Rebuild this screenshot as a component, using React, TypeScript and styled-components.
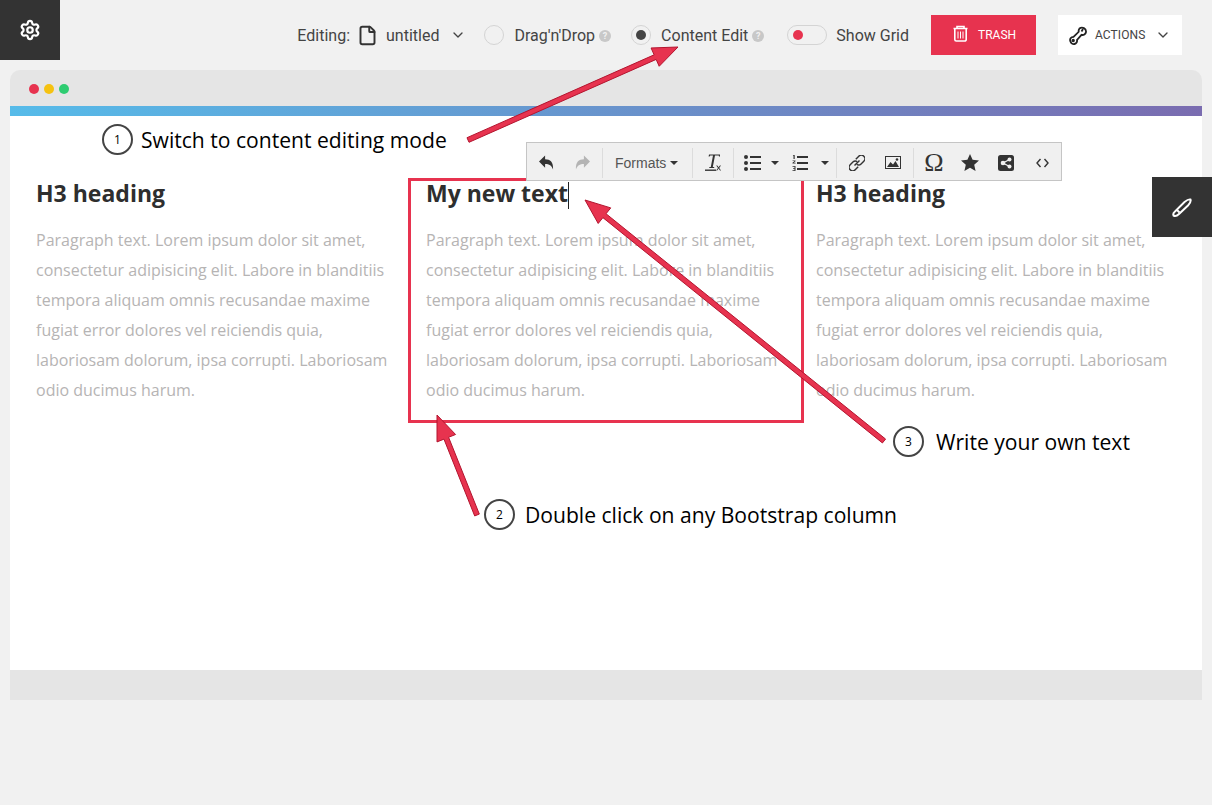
import React from "react";
import styled, { createGlobalStyle } from "styled-components";
import { ChevronDown, File, Settings } from "lucide-react";

const Global = createGlobalStyle`
  html, body { margin: 0; padding: 0; background: #f1f1f1; }
  body { font-family: Roboto, "Liberation Sans", sans-serif; }
`;

const Page = styled.div`
  position: relative;
  width: 1212px;
  height: 805px;
  overflow: hidden;
  background: #f1f1f1;
`;

const TopBar = styled.header`
  display: flex;
  align-items: flex-start;
  justify-content: space-between;
  height: 70px;
`;

const GearBox = styled.div`
  width: 60px;
  height: 60px;
  background: #333;
  color: #fff;
  display: flex;
  align-items: center;
  justify-content: center;
`;

const Controls = styled.div`
  display: flex;
  align-items: center;
  height: 40px;
  margin-top: 15px;
  margin-right: 30px;
  color: #444;
  font-size: 16px;
`;

const Label = styled.span<{ $ml?: number }>`
  margin-left: ${(p) => p.$ml ?? 0}px;
  white-space: nowrap;
`;

const FileSlot = styled.span`
  display: flex;
  margin-left: 7px;
  margin-right: 8px;
  color: #333;
`;

const Radio = styled.span<{ $ml: number; $on?: boolean }>`
  box-sizing: border-box;
  margin-left: ${(p) => p.$ml}px;
  width: 20px;
  height: 20px;
  border-radius: 50%;
  border: 1px solid #d4d4d4;
  display: flex;
  align-items: center;
  justify-content: center;
  &::after {
    content: "";
    display: ${(p) => (p.$on ? "block" : "none")};
    width: 10px;
    height: 10px;
    border-radius: 50%;
    background: #444;
  }
`;

const Help = styled.span`
  margin-left: 4px;
  margin-top: 1px;
  width: 12px;
  height: 12px;
  border-radius: 50%;
  background: #c8c8c8;
  color: #f1f1f1;
  font-size: 9px;
  font-weight: 700;
  line-height: 12px;
  text-align: center;
`;

const Switch = styled.span`
  box-sizing: border-box;
  margin-left: 23px;
  width: 40px;
  height: 20px;
  border-radius: 10px;
  border: 1px solid #d4d4d4;
  display: flex;
  align-items: center;
  padding-left: 5px;
  &::after {
    content: "";
    width: 10px;
    height: 10px;
    border-radius: 50%;
    background: #e7334f;
  }
`;

const TrashButton = styled.div`
  margin-left: 22px;
  width: 105px;
  height: 40px;
  background: #e7334f;
  color: #fff;
  display: flex;
  align-items: center;
  padding-left: 22px;
  box-sizing: border-box;
  gap: 10px;
  font-size: 12px;
  font-weight: 400;
  svg {
    margin-top: -3px;
  }
`;

const ActionsButton = styled.div`
  margin-left: 22px;
  width: 124px;
  height: 40px;
  background: #fff;
  color: #444;
  display: flex;
  align-items: center;
  padding-left: 10px;
  box-sizing: border-box;
  font-size: 12px;
  letter-spacing: 0.1px;
`;

const Frame = styled.main`
  margin: 0 10px;
`;

const TitleBar = styled.div`
  height: 36px;
  background: #e5e5e5;
  border-radius: 10px 10px 0 0;
  display: flex;
  align-items: center;
  gap: 5px;
  padding: 2px 0 0 19px;
  box-sizing: border-box;
`;

const Dot = styled.span<{ $c: string }>`
  width: 10px;
  height: 10px;
  border-radius: 50%;
  background: ${(p) => p.$c};
`;

const Stripe = styled.div`
  height: 10px;
  background: linear-gradient(90deg, #56bbe9, #7a6cb0);
`;

const Content = styled.div`
  height: 554px;
  background: #fff;
  padding: 65px 11px 0;
  box-sizing: border-box;
  display: flex;
  font-family: "Open Sans", sans-serif;
`;

const Column = styled.section<{ $selected?: boolean }>`
  width: 390px;
  height: 239px;
  padding: 0 15px;
  box-sizing: border-box;
  outline: ${(p) => (p.$selected ? "3px solid #e7334f" : "none")};
`;

const Heading = styled.h3`
  margin: 0 0 19px;
  color: #2e2e2e;
  font-size: 23px;
  line-height: 25px;
  font-weight: 700;
  height: 25px;
`;

const Caret = styled.span`
  display: inline-block;
  width: 1px;
  height: 27px;
  background: #222;
  vertical-align: -7px;
`;

const Para = styled.p`
  margin: 0;
  color: #b6b4b4;
  font-size: 16px;
  line-height: 30px;
`;

const Footer = styled.div`
  height: 30px;
  background: #e5e5e5;
`;

const SideTab = styled.div`
  position: absolute;
  top: 177px;
  right: 0;
  width: 60px;
  height: 60px;
  background: #333;
  color: #fff;
  display: flex;
  align-items: center;
  justify-content: center;
`;

const Editor = styled.div`
  position: absolute;
  left: 526px;
  top: 142px;
  width: 536px;
  height: 39px;
  box-sizing: border-box;
  padding-top: 2px;
  background: #f0f0f0;
  border: 1px solid #c5c5c5;
  display: flex;
  align-items: center;
  color: #333;
`;

const Group = styled.div<{ $w: number; $last?: boolean }>`
  width: ${(p) => p.$w}px;
  height: 30px;
  box-sizing: border-box;
  border-right: ${(p) => (p.$last ? "none" : "1px solid #dcdcdc")};
  display: flex;
  align-items: center;
  flex: none;
`;

const ToolIcon = styled.span<{ $w: number; $muted?: boolean }>`
  width: ${(p) => p.$w}px;
  flex: none;
  display: flex;
  align-items: center;
  justify-content: center;
  color: ${(p) => (p.$muted ? "#b4b4b4" : "#333")};
`;

const Formats = styled.span`
  font-family: "Liberation Sans", Arial, sans-serif;
  font-size: 14px;
  color: #555;
  margin-left: 12px;
  padding-top: 1px;
  display: flex;
  align-items: center;
  gap: 4px;
`;

const DownCaret = styled.i`
  display: inline-block;
  flex: none;
  width: 0;
  height: 0;
  border-left: 4px solid transparent;
  border-right: 4px solid transparent;
  border-top: 4px solid #333;
`;

const Omega = styled.span`
  font-family: "Liberation Serif", serif;
  font-size: 26px;
  line-height: 22px;
`;

const Callout = styled.div<{ $x: number; $y: number }>`
  position: absolute;
  left: ${(p) => p.$x}px;
  top: ${(p) => p.$y}px;
  height: 31px;
  display: flex;
  align-items: center;
  color: #000;
  font-family: "Open Sans", sans-serif;
  font-size: 21.1px;
  white-space: nowrap;
`;

const Badge = styled.span<{ $mr?: number }>`
  box-sizing: border-box;
  width: 31px;
  height: 31px;
  border: 2px solid #444;
  border-radius: 50%;
  background: #fff;
  display: flex;
  align-items: center;
  justify-content: center;
  font-size: 12px;
  margin-right: ${(p) => p.$mr ?? 8}px;
`;

const CalloutText = styled.span`
  line-height: 31px;
`;

const ArrowLayer = styled.svg`
  position: absolute;
  left: 0;
  top: 0;
  pointer-events: none;
`;

type Pt = [number, number];

function Arrow({ tail, tip, head = 25, spread = 10, shaft = 2.5 }: { tail: Pt; tip: Pt; head?: number; spread?: number; shaft?: number }) {
  const dx = tip[0] - tail[0];
  const dy = tip[1] - tail[1];
  const len = Math.hypot(dx, dy);
  const ux = dx / len;
  const uy = dy / len;
  const nx = -uy;
  const ny = ux;
  const bx = tip[0] - ux * head;
  const by = tip[1] - uy * head;
  const pts: Pt[] = [
    [tail[0] + nx * shaft, tail[1] + ny * shaft],
    [bx + nx * shaft, by + ny * shaft],
    [bx + nx * spread, by + ny * spread],
    tip,
    [bx - nx * spread, by - ny * spread],
    [bx - nx * shaft, by - ny * shaft],
    [tail[0] - nx * shaft, tail[1] - ny * shaft],
  ];
  return <polygon points={pts.map((p) => p.join(",")).join(" ")} fill="#e7334f" stroke="#b3152f" strokeWidth="1" />;
}

const Bullets = () => (
  <svg width="17" height="16" viewBox="0 0 17 16" fill="currentColor">
    <circle cx="2" cy="2" r="2" />
    <circle cx="2" cy="8" r="2" />
    <circle cx="2" cy="14" r="2" />
    <rect x="6" y="1" width="11" height="2" />
    <rect x="6" y="7" width="11" height="2" />
    <rect x="6" y="13" width="11" height="2" />
  </svg>
);

const Numbers = () => (
  <svg width="16" height="16" viewBox="0 0 16 16" fill="currentColor">
    <path d="M1.500 0h1.200v4H1.500V1H.8zM.5 5.400h3v.9L1.800 7.700h1.800v.8H.5v-.8l2-1.600h-2zM.5 11h3v5h-3v-.8h2V14H1.100v-.7H2.500V11.800h-2z" />
    <rect x="5" y="1" width="11" height="2" />
    <rect x="5" y="7" width="11" height="2" />
    <rect x="5" y="13" width="11" height="2" />
  </svg>
);

const Undo = ({ flip }: { flip?: boolean }) => (
  <svg width="15" height="15" viewBox="0 0 16 15" fill="currentColor" style={flip ? { transform: "scaleX(-1)" } : undefined}>
    <path d="M6.500 0v4C12 4 15.500 7 15 15c-1.500-4.500-4-6-8.500-6v4L0 6.500z" />
  </svg>
);

const ClearFormat = () => (
  <svg width="17" height="17" viewBox="0 0 17 17" fill="currentColor">
    <path d="M4 .5h11v2h-1l-.3-1H10L7.800 13H9.200v1H4.300v-1h1.500L8 1.500H5.200l-.6 1h-1z" />
    <rect x="0" y="15.500" width="11" height="1.400" />
    <path d="M11.200 11.500h1.100l1.300 1.700 1.300-1.700H16l-1.800 2.400 1.900 2.600h-1.100l-1.400-1.900-1.400 1.900h-1.100l1.900-2.600z" />
  </svg>
);

const LinkIcon = () => (
  <svg width="16" height="16" viewBox="0 0 16 16" fill="none" stroke="currentColor" strokeWidth="1.400">
    <path d="M6.800 4.200l3-3a2.800 2.800 0 0 1 5 5l-3 3a2.800 2.800 0 0 1-4 0" />
    <path d="M9.200 11.800l-3 3a2.800 2.800 0 0 1-5-5l3-3a2.800 2.800 0 0 1 4 0" />
    <path d="M5.500 10.500l5-5" />
  </svg>
);

const ImageIcon = () => (
  <svg width="16" height="13" viewBox="0 0 16 13" fill="none">
    <rect x=".5" y=".5" width="15" height="12" stroke="#333" />
    <path fill="#333" d="M2 11l3.500-5 2.500 2.500 2.500-3.500 3.500 6z" />
    <circle cx="12" cy="3.500" r="1.300" fill="#333" />
  </svg>
);

const Star = () => (
  <svg width="18" height="17" viewBox="0 0 18 17" fill="currentColor">
    <path d="M9 0l2.600 5.800 6.400.7-4.800 4.200 1.400 6.300L9 13.800 3.400 17l1.400-6.300L0 6.500l6.400-.7z" />
  </svg>
);

const ShareBox = () => (
  <svg width="16" height="16" viewBox="0 0 16 16">
    <rect width="16" height="16" rx="2.500" fill="#333" />
    <g fill="#f0f0f0">
      <circle cx="11.500" cy="4.500" r="2" />
      <circle cx="11.500" cy="11.500" r="2" />
      <circle cx="5" cy="8" r="2.300" />
    </g>
    <path d="M11.500 4.500L5 8l6.500 3.500" stroke="#f0f0f0" strokeWidth="1.300" fill="none" />
  </svg>
);

const CodeIcon = () => (
  <svg width="13" height="10" viewBox="0 0 13 10" fill="none" stroke="currentColor" strokeWidth="1.400">
    <path d="M4.500 1L1 5l3.500 4M8.500 1L12 5 8.500 9" />
  </svg>
);

const TrashIcon = () => (
  <svg width="15" height="17" viewBox="0 0 15 17" fill="none" stroke="#fff" strokeWidth="1.600">
    <path d="M4 3V1.500h7V3M.5 3.500h14M1.800 4v10.500a1.500 1.500 0 0 0 1.500 1.500h8.400a1.500 1.500 0 0 0 1.500-1.500V4" />
    <path d="M5 6.500v7M7.500 6.500v7M10 6.500v7" strokeWidth="1" />
  </svg>
);

const WrenchIcon = () => (
  <svg width="20" height="19" viewBox="0 0 19 19" fill="none" stroke="#222" strokeWidth="1.800">
    <path d="M11 2.500a4 4 0 0 1 6.500 3.500c-.3 2-2.500 3.500-4.500 2.800L8.500 14a3.300 3.300 0 0 1-6.500 1.500C.800 13 2.500 11 5 10.800l5.200-5a4 4 0 0 1 .8-3.300z" />
    <circle cx="4.700" cy="14.500" r=".8" />
    <path d="M14.500 3l-1.500 2.500" />
  </svg>
);

const Feather = () => (
  <svg width="20" height="19" viewBox="0 0 20 19" fill="none" stroke="#fff" strokeWidth="2">
    <path d="M1.500 17.500c-.6-1.500.2-3 1.500-4L12.500 4c2.500-2 4.500-3 6-2.500.5 1.500-.5 4-2.500 6L7 16c-1.500 1.400-3.500 2.500-5.500 1.500z" />
    <path d="M4.500 11.500l3 3" />
  </svg>
);

const columns = [
  { title: "H3 heading" },
  { title: "My new text", selected: true },
  { title: "H3 heading" },
];

const lines = [
  "Paragraph text. Lorem ipsum dolor sit amet,",
  "consectetur adipisicing elit. Labore in blanditiis",
  "tempora aliquam omnis recusandae maxime",
  "fugiat error dolores vel reiciendis quia,",
  "laboriosam dolorum, ipsa corrupti. Laboriosam",
  "odio ducimus harum.",
];

export default function App() {
  return (
    <Page>
      <Global />
      <TopBar>
        <GearBox>
          <Settings size={22} strokeWidth={2.4} />
        </GearBox>
        <Controls>
          <Label>Editing:</Label>
          <FileSlot>
            <File size={21} strokeWidth={2.2} />
          </FileSlot>
          <Label>untitled</Label>
          <ChevronDown size={16} strokeWidth={2} style={{ marginLeft: 11 }} />
          <Radio $ml={18} />
          <Label $ml={10}>Drag'n'Drop</Label>
          <Help>?</Help>
          <Radio $ml={20} $on />
          <Label $ml={10}>Content Edit</Label>
          <Help>?</Help>
          <Switch />
          <Label $ml={9}>Show Grid</Label>
          <TrashButton>
            <TrashIcon />
            TRASH
          </TrashButton>
          <ActionsButton>
            <WrenchIcon />
            <Label $ml={7}>ACTIONS</Label>
            <ChevronDown size={16} strokeWidth={2} style={{ marginLeft: 10 }} />
          </ActionsButton>
        </Controls>
      </TopBar>

      <Frame>
        <TitleBar>
          <Dot $c="#e7334f" />
          <Dot $c="#f5c211" />
          <Dot $c="#2ecc71" />
        </TitleBar>
        <Stripe />
        <Content>
          {columns.map((c, i) => (
            <Column key={i} $selected={c.selected}>
              <Heading>
                {c.title}
                {c.selected && <Caret />}
              </Heading>
              <Para>
                {lines.map((l) => (
                  <React.Fragment key={l}>
                    {l}
                    <br />
                  </React.Fragment>
                ))}
              </Para>
            </Column>
          ))}
        </Content>
        <Footer />
      </Frame>

      <SideTab>
        <Feather />
      </SideTab>

      <Callout $x={102} $y={124}>
        <Badge>1</Badge>
        <CalloutText>Switch to content editing mode</CalloutText>
      </Callout>

      <ArrowLayer width="1212" height="805">
        <Arrow tail={[468, 140]} tip={[678, 47]} />
        <Arrow tail={[477, 515]} tip={[437, 415]} />
        <Arrow tail={[884, 441]} tip={[585, 200]} />
      </ArrowLayer>

      <Editor>
        <Group $w={76}>
          <ToolIcon $w={38}>
            <Undo />
          </ToolIcon>
          <ToolIcon $w={34} $muted>
            <Undo flip />
          </ToolIcon>
        </Group>
        <Group $w={90}>
          <Formats>
            Formats <DownCaret />
          </Formats>
        </Group>
        <Group $w={41}>
          <ToolIcon $w={40}>
            <ClearFormat />
          </ToolIcon>
        </Group>
        <Group $w={103}>
          <ToolIcon $w={37}>
            <Bullets />
          </ToolIcon>
          <DownCaret />
          <ToolIcon $w={42}>
            <Numbers />
          </ToolIcon>
          <DownCaret />
        </Group>
        <Group $w={77}>
          <ToolIcon $w={40}>
            <LinkIcon />
          </ToolIcon>
          <ToolIcon $w={32}>
            <ImageIcon />
          </ToolIcon>
        </Group>
        <Group $w={148} $last>
          <ToolIcon $w={40}>
            <Omega>Ω</Omega>
          </ToolIcon>
          <ToolIcon $w={32}>
            <Star />
          </ToolIcon>
          <ToolIcon $w={40}>
            <ShareBox />
          </ToolIcon>
          <ToolIcon $w={32}>
            <CodeIcon />
          </ToolIcon>
        </Group>
      </Editor>

      <Callout $x={484} $y={499}>
        <Badge $mr={10}>2</Badge>
        <CalloutText>Double click on any Bootstrap column</CalloutText>
      </Callout>
      <Callout $x={893} $y={426}>
        <Badge $mr={12}>3</Badge>
        <CalloutText>Write your own text</CalloutText>
      </Callout>
    </Page>
  );
}
